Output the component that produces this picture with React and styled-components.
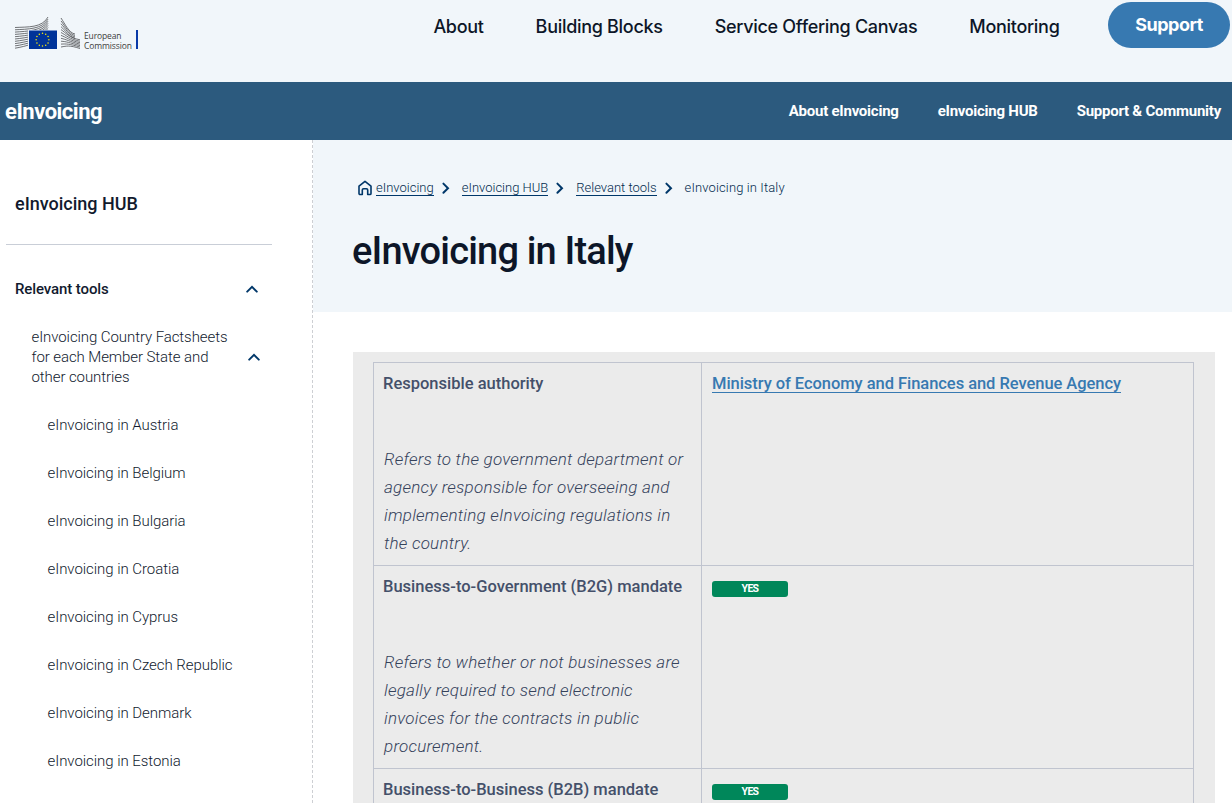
import styled, { createGlobalStyle, css } from 'styled-components';

const GlobalStyle = createGlobalStyle`
  * {
    box-sizing: border-box;
  }
  body {
    margin: 0;
    background: #fff;
    color: #26324b;
    font-family: Roboto, 'Open Sans', sans-serif;
  }
  a {
    color: inherit;
    text-decoration: none;
  }
`;

const Page = styled.div`
  display: flex;
  flex-direction: column;
  width: 100%;
  height: 803px;
  overflow: hidden;
`;

const Header = styled.header`
  display: flex;
  align-items: flex-start;
  justify-content: space-between;
  flex: none;
  height: 82px;
  padding: 2px 2px 0 14px;
  background-color: #f1f6fa;
`;

const LogoSvg = styled.svg`
  display: block;
  margin-top: 12px;
`;

const LogoText = styled.text`
  font-family: 'Open Sans', sans-serif;
  font-size: 8.5px;
  fill: #404040;
`;

const MainNav = styled.nav`
  display: flex;
  align-items: center;
  gap: 52px;
  height: 46px;
  font-family: Inter, sans-serif;
  font-size: 18px;
  font-weight: 500;
  letter-spacing: -0.3px;
  color: #0d1628;
  white-space: nowrap;
`;

const MainNavLink = styled.a`
  margin-top: 2px;
`;

const SupportButton = styled.a`
  width: 122px;
  height: 46px;
  margin-left: -3.5px;
  border-radius: 23px;
  background-color: #3779b1;
  color: #fff;
  font-weight: 700;
  line-height: 46px;
  text-align: center;
  letter-spacing: -0.5px;
`;

const SiteBar = styled.div`
  display: flex;
  align-items: center;
  justify-content: space-between;
  flex: none;
  height: 58px;
  padding: 0 11px 0 5px;
  background-color: #2c5a7e;
  color: #fff;
  font-weight: 700;
`;

const SiteName = styled.a`
  font-size: 22px;
  letter-spacing: -0.5px;
`;

const SiteNav = styled.nav`
  display: flex;
  gap: 39px;
  font-size: 15px;
  letter-spacing: -0.24px;
`;

const Body = styled.div`
  display: flex;
  flex: 1;
  min-height: 0;
`;

const Sidebar = styled.aside`
  flex: none;
  width: 313px;
  padding: 40px 40px 0 6px;
  border-right: 1px dashed #cdcfd3;
  color: #111a2e;
`;

const SidebarTitle = styled.h2`
  height: 65px;
  margin: 0 0 20px;
  padding-left: 9px;
  border-bottom: 1px solid #c9ced7;
  font-size: 18px;
  font-weight: 500;
  line-height: 47px;
`;

const MenuItem = styled.a`
  display: flex;
  align-items: center;
  justify-content: space-between;
  min-height: 48px;
  padding: 14px 13px 14px 9px;
  font-size: 15px;
  line-height: 20px;
  font-weight: 300;

  ${({ $level }) =>
    $level === 0 &&
    css`
      font-weight: 500;
      letter-spacing: -0.1px;
    `}
  ${({ $level }) =>
    $level === 1 &&
    css`
      padding-left: 25.5px;
      padding-right: 11px;
      letter-spacing: -0.08px;
    `}
  ${({ $level }) =>
    $level === 2 &&
    css`
      padding-left: 41.5px;
      letter-spacing: -0.05px;
    `}
`;

const MenuLabel = styled.span`
  max-width: 205px;
`;

const Main = styled.main`
  flex: 1;
  min-width: 0;
`;

const Hero = styled.section`
  height: 172px;
  padding: 38px 40px 0;
  background-color: #f1f6fa;
`;

const Breadcrumbs = styled.nav`
  display: flex;
  align-items: center;
  height: 20px;
  padding-left: 4px;
  color: #002a4d;
  font-size: 13px;
  font-weight: 300;
`;

const HomeIcon = styled.svg`
  margin-right: 3px;
`;

const Crumb = styled.a`
  line-height: 15px;
  border-bottom: 1px solid ${({ $current }) => ($current ? 'transparent' : '#003769')};
  letter-spacing: ${({ $current }) => ($current ? 0.12 : 0)}px;
`;

const CrumbArrow = styled.svg`
  margin: 0 11px 0 6px;
`;

const PageTitle = styled.h1`
  margin: 28px 0 0 -1px;
  font-size: 38px;
  font-weight: 500;
  line-height: 50px;
  letter-spacing: -0.82px;
  color: #0d1628;
`;

const Panel = styled.section`
  width: 862px;
  margin: 40px 0 0 40px;
  padding: 10px 21px 20px 20px;
  background-color: #ebebeb;
`;

const Table = styled.div`
  border: 1px solid #c0c4cf;
`;

const Row = styled.div`
  display: grid;
  grid-template-columns: 328px 1fr;
  min-height: 203px;
  border-bottom: 1px solid #c0c4cf;
`;

const Cell = styled.div`
  padding: 7px 9px;
  font-size: 17px;
  line-height: 28px;
  color: #44506a;

  & + & {
    padding-left: 10px;
  }
  &:first-child {
    border-right: 1px solid #c0c4cf;
  }
`;

const RowTitle = styled.h3`
  margin: 0 0 47px;
  font-size: 16.5px;
  font-weight: 500;
  line-height: 28px;
  white-space: nowrap;
`;

const Description = styled.p`
  margin: 0;
  padding: 0 0 1px 1px;
  color: #35425b;
  font-style: italic;
  font-weight: 300;
  letter-spacing: 0.23px;
  white-space: nowrap;
`;

const AuthorityLink = styled.a`
  display: inline-block;
  line-height: 17px;
  margin-top: 5px;
  vertical-align: top;
  border-bottom: 1px solid #3779b1;
  color: #3779b1;
  font-size: 16.5px;
  font-weight: 500;
  letter-spacing: -0.05px;
`;

const Status = styled.span`
  display: block;
  width: 76px;
  height: 16px;
  margin-top: 8px;
  border-radius: 3px;
  background-color: #00875a;
  color: #fff;
  font-size: 10.5px;
  font-weight: 700;
  line-height: 15px;
  text-align: center;
  letter-spacing: -0.7px;
`;

const siteLinks = ['About eInvoicing', 'eInvoicing HUB', 'Support & Community'];

const mainLinks = ['About', 'Building Blocks', 'Service Offering Canvas', 'Monitoring'];

const countries = ['Austria', 'Belgium', 'Bulgaria', 'Croatia', 'Cyprus', 'Czech Republic', 'Denmark', 'Estonia'];

const crumbs = ['eInvoicing', 'eInvoicing HUB', 'Relevant tools'];

const mandates = [
  {
    title: 'Business-to-Government (B2G) mandate',
    lines: [
      'Refers to whether or not businesses are',
      'legally required to send electronic',
      'invoices for the contracts in public',
      'procurement.',
    ],
  },
  { title: 'Business-to-Business (B2B) mandate', lines: [] },
];

const range = (n) => Array.from({ length: n }, (_, i) => i);

function Logo() {
  return (
    <LogoSvg width="126" height="38" viewBox="0 0 126 38" aria-label="European Commission">
      <g fill="none" stroke="#45474a" strokeWidth="0.75">
        {range(10).map((i) => (
          <path key={i} d={`M1 ${13.5 + i * 2.3}C${14 - i * 0.3} ${12.8 + i * 2.2} 28 ${14 + i * 1.5} 34 ${3 + i * 2.1}`} />
        ))}
        {range(11).map((i) => (
          <path key={i} d={`M47 ${4 + i * 2.9}C${51 + i * 0.2} ${10 + i * 2.2} 55 ${19 + i * 1.2} ${i < 4 ? 61 : 66} ${20 + i * 1.45}`} />
        ))}
      </g>
      <rect x="14" y="16" width="29" height="19" fill="#f1f6fa" />
      <rect x="15" y="16.5" width="28" height="18.5" fill="#003399" />
      <g fill="#ffed00">
        {range(12).map((i) => {
          const a = (i * Math.PI) / 6;
          return <circle key={i} cx={28.5 + Math.sin(a) * 6.4} cy={25.7 - Math.cos(a) * 6.4} r="0.75" />;
        })}
      </g>
      <LogoText x="70" y="25" textLength="37.5">
        European
      </LogoText>
      <LogoText x="70" y="34.5" textLength="48">
        Commission
      </LogoText>
      <rect x="122" y="16" width="2" height="19" fill="#0a3aa8" />
    </LogoSvg>
  );
}

function ChevronUp() {
  return (
    <svg width="14" height="10" viewBox="0 0 14 10" fill="none" stroke="#003769" strokeWidth="2">
      <path d="M2.2 7.6 7 2.9l4.8 4.7" strokeLinecap="round" />
    </svg>
  );
}

function App() {
  return (
    <Page>
      <GlobalStyle />
      <Header>
        <Logo />
        <MainNav>
          {mainLinks.map((label) => (
            <MainNavLink key={label}>{label}</MainNavLink>
          ))}
          <SupportButton>Support</SupportButton>
        </MainNav>
      </Header>
      <SiteBar>
        <SiteName>eInvoicing</SiteName>
        <SiteNav>
          {siteLinks.map((label) => (
            <a key={label}>{label}</a>
          ))}
        </SiteNav>
      </SiteBar>
      <Body>
        <Sidebar>
          <SidebarTitle>eInvoicing HUB</SidebarTitle>
          <MenuItem $level={0}>
            <MenuLabel>Relevant tools</MenuLabel>
            <ChevronUp />
          </MenuItem>
          <MenuItem $level={1}>
            <MenuLabel>
              eInvoicing Country Factsheets
              <br />
              for each Member State and
              <br />
              other countries
            </MenuLabel>
            <ChevronUp />
          </MenuItem>
          {countries.map((country) => (
            <MenuItem key={country} $level={2}>
              eInvoicing in {country}
            </MenuItem>
          ))}
        </Sidebar>
        <Main>
          <Hero>
            <Breadcrumbs>
              <HomeIcon width="16" height="16" viewBox="0 0 16 16" fill="none" stroke="#003769" strokeWidth="1.6">
                <path
                  d="M2 6.2 8 1.4l6 4.8v7.2c0 .7-.4 1.1-1.1 1.1h-2.2V10c0-.8-.4-1.2-1.2-1.2h-3c-.8 0-1.2.4-1.2 1.2v4.5H3.1c-.7 0-1.1-.4-1.1-1.1Z"
                  strokeLinejoin="round"
                />
              </HomeIcon>
              {crumbs.map((label) => [
                <Crumb key={label}>{label}</Crumb>,
                <CrumbArrow key={`${label}-arrow`} width="11" height="14" viewBox="0 0 11 14" fill="none" stroke="#003769" strokeWidth="2">
                  <path d="m3.4 2.6 4.6 4.6-4.6 4.6" strokeLinecap="round" />
                </CrumbArrow>,
              ])}
              <Crumb $current>eInvoicing in Italy</Crumb>
            </Breadcrumbs>
            <PageTitle>eInvoicing in Italy</PageTitle>
          </Hero>
          <Panel>
            <Table>
              <Row>
                <Cell>
                  <RowTitle>Responsible authority</RowTitle>
                  <Description>
                    Refers to the government department or
                    <br />
                    agency responsible for overseeing and
                    <br />
                    implementing eInvoicing regulations in
                    <br />
                    the country.
                  </Description>
                </Cell>
                <Cell>
                  <AuthorityLink>Ministry of Economy and Finances and Revenue Agency</AuthorityLink>
                </Cell>
              </Row>
              {mandates.map(({ title, lines }) => (
                <Row key={title}>
                  <Cell>
                    <RowTitle>{title}</RowTitle>
                    <Description>
                      {lines.map((line) => (
                        <span key={line}>
                          {line}
                          <br />
                        </span>
                      ))}
                    </Description>
                  </Cell>
                  <Cell>
                    <Status>YES</Status>
                  </Cell>
                </Row>
              ))}
            </Table>
          </Panel>
        </Main>
      </Body>
    </Page>
  );
}

export default App;
